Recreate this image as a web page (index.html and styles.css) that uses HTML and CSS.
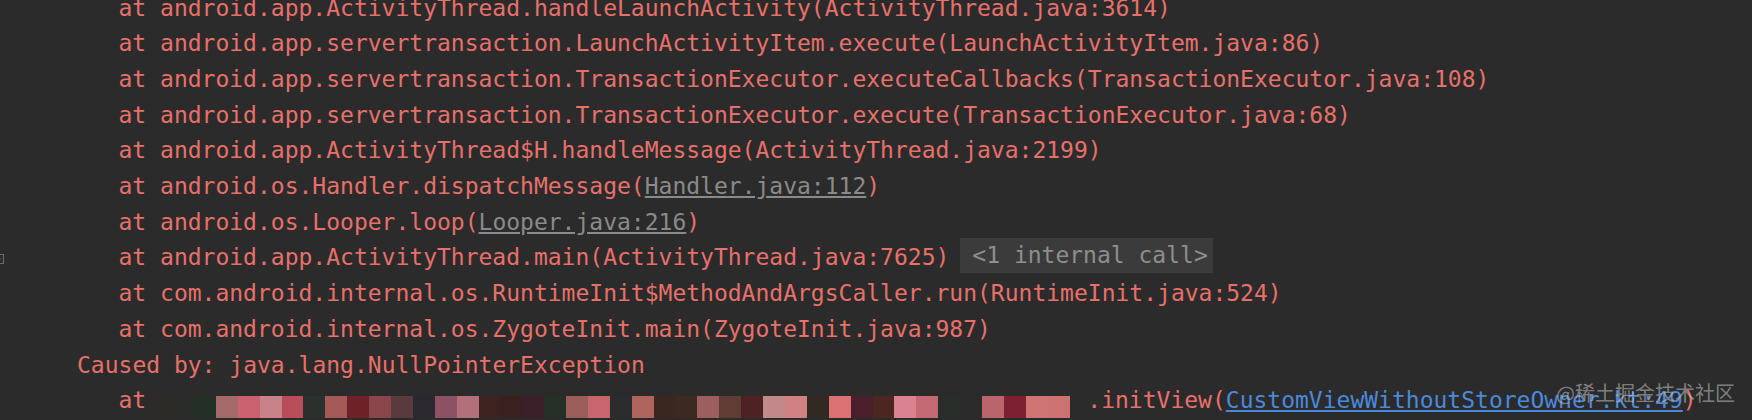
FILE: index.html
```html
<!DOCTYPE html>
<html lang="en">
<head>
  <meta charset="UTF-8">
  <title>Logcat</title>
  <link rel="stylesheet" href="styles.css">
</head>
<body>
  <div class="console">
    <div class="line frame">at android.app.ActivityThread.handleLaunchActivity(ActivityThread.java:3614)</div>
    <div class="line frame">at android.app.servertransaction.LaunchActivityItem.execute(LaunchActivityItem.java:86)</div>
    <div class="line frame">at android.app.servertransaction.TransactionExecutor.executeCallbacks(TransactionExecutor.java:108)</div>
    <div class="line frame">at android.app.servertransaction.TransactionExecutor.execute(TransactionExecutor.java:68)</div>
    <div class="line frame">at android.app.ActivityThread$H.handleMessage(ActivityThread.java:2199)</div>
    <div class="line frame">at android.os.Handler.dispatchMessage(<span class="lib">Handler.java:112</span>)</div>
    <div class="line frame">at android.os.Looper.loop(<span class="lib">Looper.java:216</span>)</div>
    <div class="line frame has-fold">
      <span class="fold"><svg width="10" height="10" viewBox="0 0 10 10"><rect x="0.5" y="0.5" width="9" height="9" fill="none" stroke="#6b6b6b"/><path d="M3 5h4" stroke="#6b6b6b"/></svg></span>at android.app.ActivityThread.main(ActivityThread.java:7625)<span class="folded">&lt;1 internal call&gt;</span></div>
    <div class="line frame">at com.android.internal.os.RuntimeInit$MethodAndArgsCaller.run(RuntimeInit.java:524)</div>
    <div class="line frame">at com.android.internal.os.ZygoteInit.main(ZygoteInit.java:987)</div>
    <div class="line">Caused by: java.lang.NullPointerException</div>
    <div class="line frame">at<span class="mosaic" id="mosaic"></span><span class="after-mosaic">.initView(<span class="src">CustomViewWithoutStoreOwner.kt:49</span>)</span></div>
  </div>

  <div class="watermark">@稀土掘金技术社区</div>

  <script>
    // pixelated (blurred) part of the last frame
    const blocks = [
      '#2e2a28', '#2a2c2a', '#223026', '#a46a6a', '#c9616f', '#c8828a', '#b84e5a',
      '#2a302c', '#a65a58', '#6c2226', '#8a464a', '#5a3a3c', '#2c2830', '#8c5264',
      '#b2707a', '#3c2420', '#3a201e', '#3a2028', '#263026', '#9c5e5a', '#c8666e',
      '#2c2c2c', '#b0645e', '#3a2820', '#3c2a22', '#9c5e5e', '#5e3e34', '#4e2224',
      '#c08a8a', '#d08282', '#322a22', '#da7272', '#4a1e2a', '#4c2620', '#da8290',
      '#c46a74', '#2a2e2a', '#2b2b2b', '#ba646c', '#7c2032', '#d07474', '#cc7272'
    ];
    const mosaic = document.getElementById('mosaic');
    blocks.forEach(color => {
      const cell = document.createElement('span');
      cell.className = 'cell';
      cell.style.background = color;
      mosaic.appendChild(cell);
    });
  </script>
</body>
</html>
```

FILE: styles.css
```css
html, body {
  margin: 0;
  background-color: #2b2b2b;
}

body {
  height: 420px;
  overflow: hidden;
  position: relative;
  font-family: "DejaVu Sans Mono", "Liberation Mono", monospace;
  font-size: 23px;
  line-height: 35.7px;
  color: #e8706a;
}

.console {
  margin-top: -9.5px;
  padding-left: 77px;
}

.line {
  white-space: pre;
}

.frame {
  padding-left: 41.5px;
}

.has-fold {
  position: relative;
  white-space: nowrap;
}

.fold {
  position: absolute;
  left: -83px;
  top: 14px;
  line-height: 0;
}

.lib {
  color: #8a8a8a;
  text-decoration: underline;
}

.src {
  color: #4a89dc;
  text-decoration: underline;
}

.folded {
  display: inline-block;
  vertical-align: top;
  height: 35px;
  line-height: 35px;
  margin-top: -2px;
  margin-left: 11px;
  padding: 0 5px 0 12px;
  background-color: #3b3b3b;
  color: #8e8e8e;
}

.mosaic {
  display: inline-flex;
  vertical-align: -10px;
  margin-left: 4px;
}

.mosaic .cell {
  width: 21.9px;
  height: 22px;
}

.after-mosaic {
  margin-left: 17.7px;
}

.watermark {
  position: absolute;
  right: 17px;
  top: 379px;
  font-family: "Noto Sans CJK SC", "Noto Sans", sans-serif;
  font-size: 20px;
  line-height: 28px;
  color: rgba(200, 200, 200, 0.55);
}
```
